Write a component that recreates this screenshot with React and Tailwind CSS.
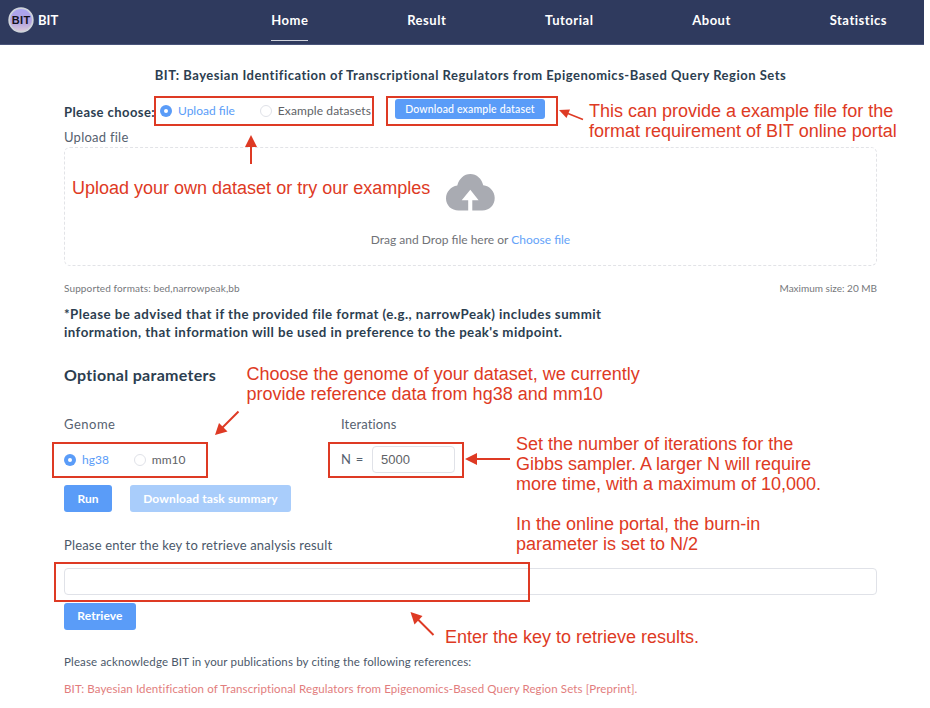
function Radio({ checked, label, labelClass }) {
  return (
    <label className="flex items-center">
      {checked ? (
        <span className="flex size-3 items-center justify-center rounded-full bg-[#5a9cf8]">
          <span className="size-1 rounded-full bg-white" />
        </span>
      ) : (
        <span className="size-3 rounded-full border border-[#e0e2e8] bg-white" />
      )}
      <span className={labelClass}>{label}</span>
    </label>
  );
}

function Logo() {
  return (
    <svg width="26" height="26" viewBox="0 0 26 26">
      <defs>
        <linearGradient id="disc" x1="0" y1="0" x2="0" y2="1">
          <stop offset="0" stopColor="#a9a4f2" />
          <stop offset="0.6" stopColor="#b3a4e0" />
          <stop offset="1" stopColor="#dccbd8" />
        </linearGradient>
      </defs>
      <circle cx="13" cy="13" r="11.8" fill="url(#disc)" stroke="#ced3da" strokeWidth="1.8" />
      <text x="13" y="17" textAnchor="middle" fontSize="11" fontWeight="700" fill="#15131c" fontFamily="Liberation Sans, sans-serif" textLength="18.5">BIT</text>
    </svg>
  );
}

function CloudUpload() {
  return (
    <svg width="49" height="38" viewBox="0 0 49 38">
      <path
        fill="#a9abb2"
        d="M12.5 36.500C5.500 36.500 0 31.500 0 24.500C0 18 4.800 12.500 11.300 11.500C13 4.900 18.100.1 24.300.1C30.500.1 35.900 4.900 37.200 11.300C43.700 12 48.700 17.500 48.700 24C48.700 31.300 43.200 36.500 36.200 36.500H26.300V26.200H32.600L24.300 15.800L15.700 26.200H22.200V36.500Z"
      />
    </svg>
  );
}

function Arrows() {
  return (
    <svg className="absolute top-0 left-0" width="930" height="708" viewBox="0 0 930 708" stroke="#de3a24" strokeWidth="2" fill="#de3a24">
      <path d="M251 164V146" />
      <path stroke="none" d="M251 135L257 147H245Z" />
      <path d="M583 119.500L568 113.500" strokeWidth="1.500" />
      <path stroke="none" d="M559 110L570 109.500L566.500 118Z" />
      <path d="M238.500 411.500L222 428" />
      <path stroke="none" d="M215 435L219 423L227.500 431.500Z" />
      <path d="M510 459H476" />
      <path stroke="none" d="M465 459L477 453V465Z" />
      <path d="M433.500 635L418 619.500" />
      <path stroke="none" d="M410.500 612L422.500 616L414.500 624.500Z" />
    </svg>
  );
}

function Callouts() {
  const text = "absolute whitespace-pre font-['Liberation_Sans',Arial,sans-serif] text-[18px] leading-5 text-[#de3a24]";
  const box = "absolute border-[2px] border-[#de3a24]";
  return (
    <div className="pointer-events-none absolute inset-0">
      <div className={`${box} top-[96px] left-[154px] h-[30px] w-[220px]`} />
      <div className={`${box} top-[96px] left-[386px] h-[30px] w-[172px]`} />
      <div className={`${box} top-[442px] left-[52px] h-[36px] w-[156px]`} />
      <div className={`${box} top-[442px] left-[328px] h-[36px] w-[136px]`} />
      <div className={`${box} top-[562px] left-[54px] h-[40px] w-[476px]`} />
      <p className={`${text} top-[101px] left-[589px]`}>{"This can provide a example file for the\nformat requirement of BIT online portal"}</p>
      <p className={`${text} top-[178px] left-[72px]`}>Upload your own dataset or try our examples</p>
      <p className={`${text} top-[364px] left-[246.500px]`}>{"Choose the genome of your dataset, we currently\nprovide reference data from hg38 and mm10"}</p>
      <p className={`${text} top-[434px] left-[516px]`}>{"Set the number of iterations for the\nGibbs sampler. A larger N will require\nmore time, with a maximum of 10,000.\n\nIn the online portal, the burn-in\nparameter is set to N/2"}</p>
      <p className={`${text} top-[627px] left-[445px]`}>Enter the key to retrieve results.</p>
      <Arrows />
    </div>
  );
}

const links = ["Home", "Result", "Tutorial", "About", "Statistics"];

export default function App() {
  return (
    <div className="relative h-[708px] w-[930px] overflow-hidden bg-white font-[Lato,sans-serif] whitespace-nowrap text-[#2c3e50]">
      <header className="flex h-[45px] w-[924px] justify-between border-b border-[#49547a] bg-[#2f3a5e] pr-[37px] pl-2 text-[13px] font-bold text-white">
        <div className="flex h-10 items-center gap-1">
          <Logo />
          <span className="pt-px">BIT</span>
        </div>
        <nav className="flex h-[41px] gap-[98.800px] tracking-[0.52px]">
          {links.map((l, i) => (
            <a key={l} className={i === 0 ? "border-b border-[#d0d3dc] leading-10" : "leading-10"}>{l}</a>
          ))}
        </nav>
      </header>

      <main className="ml-16 flex w-[813px] flex-col">
        <h1 className="mt-5 text-center text-[13px] leading-5 font-bold tracking-[0.5px]">
          BIT: Bayesian Identification of Transcriptional Regulators from Epigenomics-Based Query Region Sets
        </h1>

        <div className="mt-3.5 flex h-[26px] items-start">
          <span className="w-24 text-[13px] leading-[26px] font-bold tracking-[0.42px]">Please choose:</span>
          <div className="flex h-6 w-[235px] items-center gap-[25px] text-[12px]">
            <Radio checked label="Upload file" labelClass="ml-1.5 text-[#5a9cf8]" />
            <Radio label="Example datasets" labelClass="ml-1.5 tracking-[0.1px] text-[#606266]" />
          </div>
          <button className="h-5 w-[150px] rounded-[3px] bg-[#5a9cf8] pt-px text-[10.500px] font-medium tracking-[0.17px] text-white">Download example dataset</button>
        </div>

        <div className="mt-0.5 text-[13px] leading-5 tracking-[0.25px] text-[#56616f]">Upload file</div>
        <div className="flex h-[119px] flex-col items-center rounded-md border border-dashed border-[#e2e3e7] pt-[26px]">
          <CloudUpload />
          <p className="mt-[18px] text-[12px] leading-5 text-[#707277]">
            Drag and Drop file here or <span className="text-[#64a3f9]">Choose file</span>
          </p>
        </div>
        <div className="mt-3.5 flex justify-between text-[10px] leading-4 text-[#75777b]">
          <span className="tracking-[0.12px]">Supported formats: bed,narrowpeak,bb</span>
          <span>Maximum size: 20 MB</span>
        </div>

        <p className="mt-[9px] text-[13.300px] leading-[18px] font-bold tracking-[0.43px]">
          <span className="tracking-[0.45px]">*Please be advised that if the provided file format (e.g., narrowPeak) includes summit</span><br />
          information, that information will be used in preference to the peak&apos;s midpoint.
        </p>

        <h2 className="mt-6 text-[16px] leading-5 font-bold tracking-[0.3px]">Optional parameters</h2>

        <div className="mt-[29px] flex">
          <section className="w-[277px]">
            <div className="text-[13px] leading-5 tracking-[0.5px] text-[#56616f]">Genome</div>
            <div className="mt-3 flex h-[27px] items-center gap-[25px] text-[12px]">
              <Radio checked label="hg38" labelClass="ml-1.5 text-[#5a9cf8]" />
              <Radio label="mm10" labelClass="ml-1.5 text-[#606266]" />
            </div>
          </section>
          <section>
            <div className="text-[13px] leading-5 tracking-[0.15px] text-[#56616f]">Iterations</div>
            <div className="mt-3 flex h-[27px] items-center text-[13px] text-[#56616f]">
              <span className="w-[31px] tracking-[0.8px]">N =</span>
              <div className="flex h-[27px] w-[83px] items-center rounded border border-[#e0e2e8] px-2 pt-px font-['Liberation_Sans',sans-serif] text-[13px] text-[#606266]">5000</div>
            </div>
          </section>
        </div>

        <div className="mt-3 flex h-[27px] gap-[18px] text-[12px] font-bold text-white">
          <button className="w-12 rounded-[3px] bg-[#5a9cf8]">Run</button>
          <button className="w-[161px] rounded-[3px] bg-[#a9cdfb] tracking-[0.12px]">Download task summary</button>
        </div>

        <label className="mt-[23px] text-[13px] leading-5 tracking-[0.17px] text-[#4b586a]">Please enter the key to retrieve analysis result</label>
        <div className="mt-[13px] h-[27px] rounded border border-[#e0e2e8]" />
        <button className="mt-2 h-[27px] w-[72px] rounded-[3px] bg-[#5a9cf8] pb-px text-[12px] font-bold tracking-[0.1px] text-white">Retrieve</button>

        <p className="mt-[22px] text-[11.500px] leading-5 tracking-[0.15px] text-[#4b586a]">Please acknowledge BIT in your publications by citing the following references:</p>
        <p className="mt-[7px] text-[11.500px] leading-5 tracking-[0.12px] text-[#e27d7d]">
          BIT: Bayesian Identification of Transcriptional Regulators from Epigenomics-Based Query Region Sets [Preprint].
        </p>
      </main>

      <Callouts />
    </div>
  );
}
